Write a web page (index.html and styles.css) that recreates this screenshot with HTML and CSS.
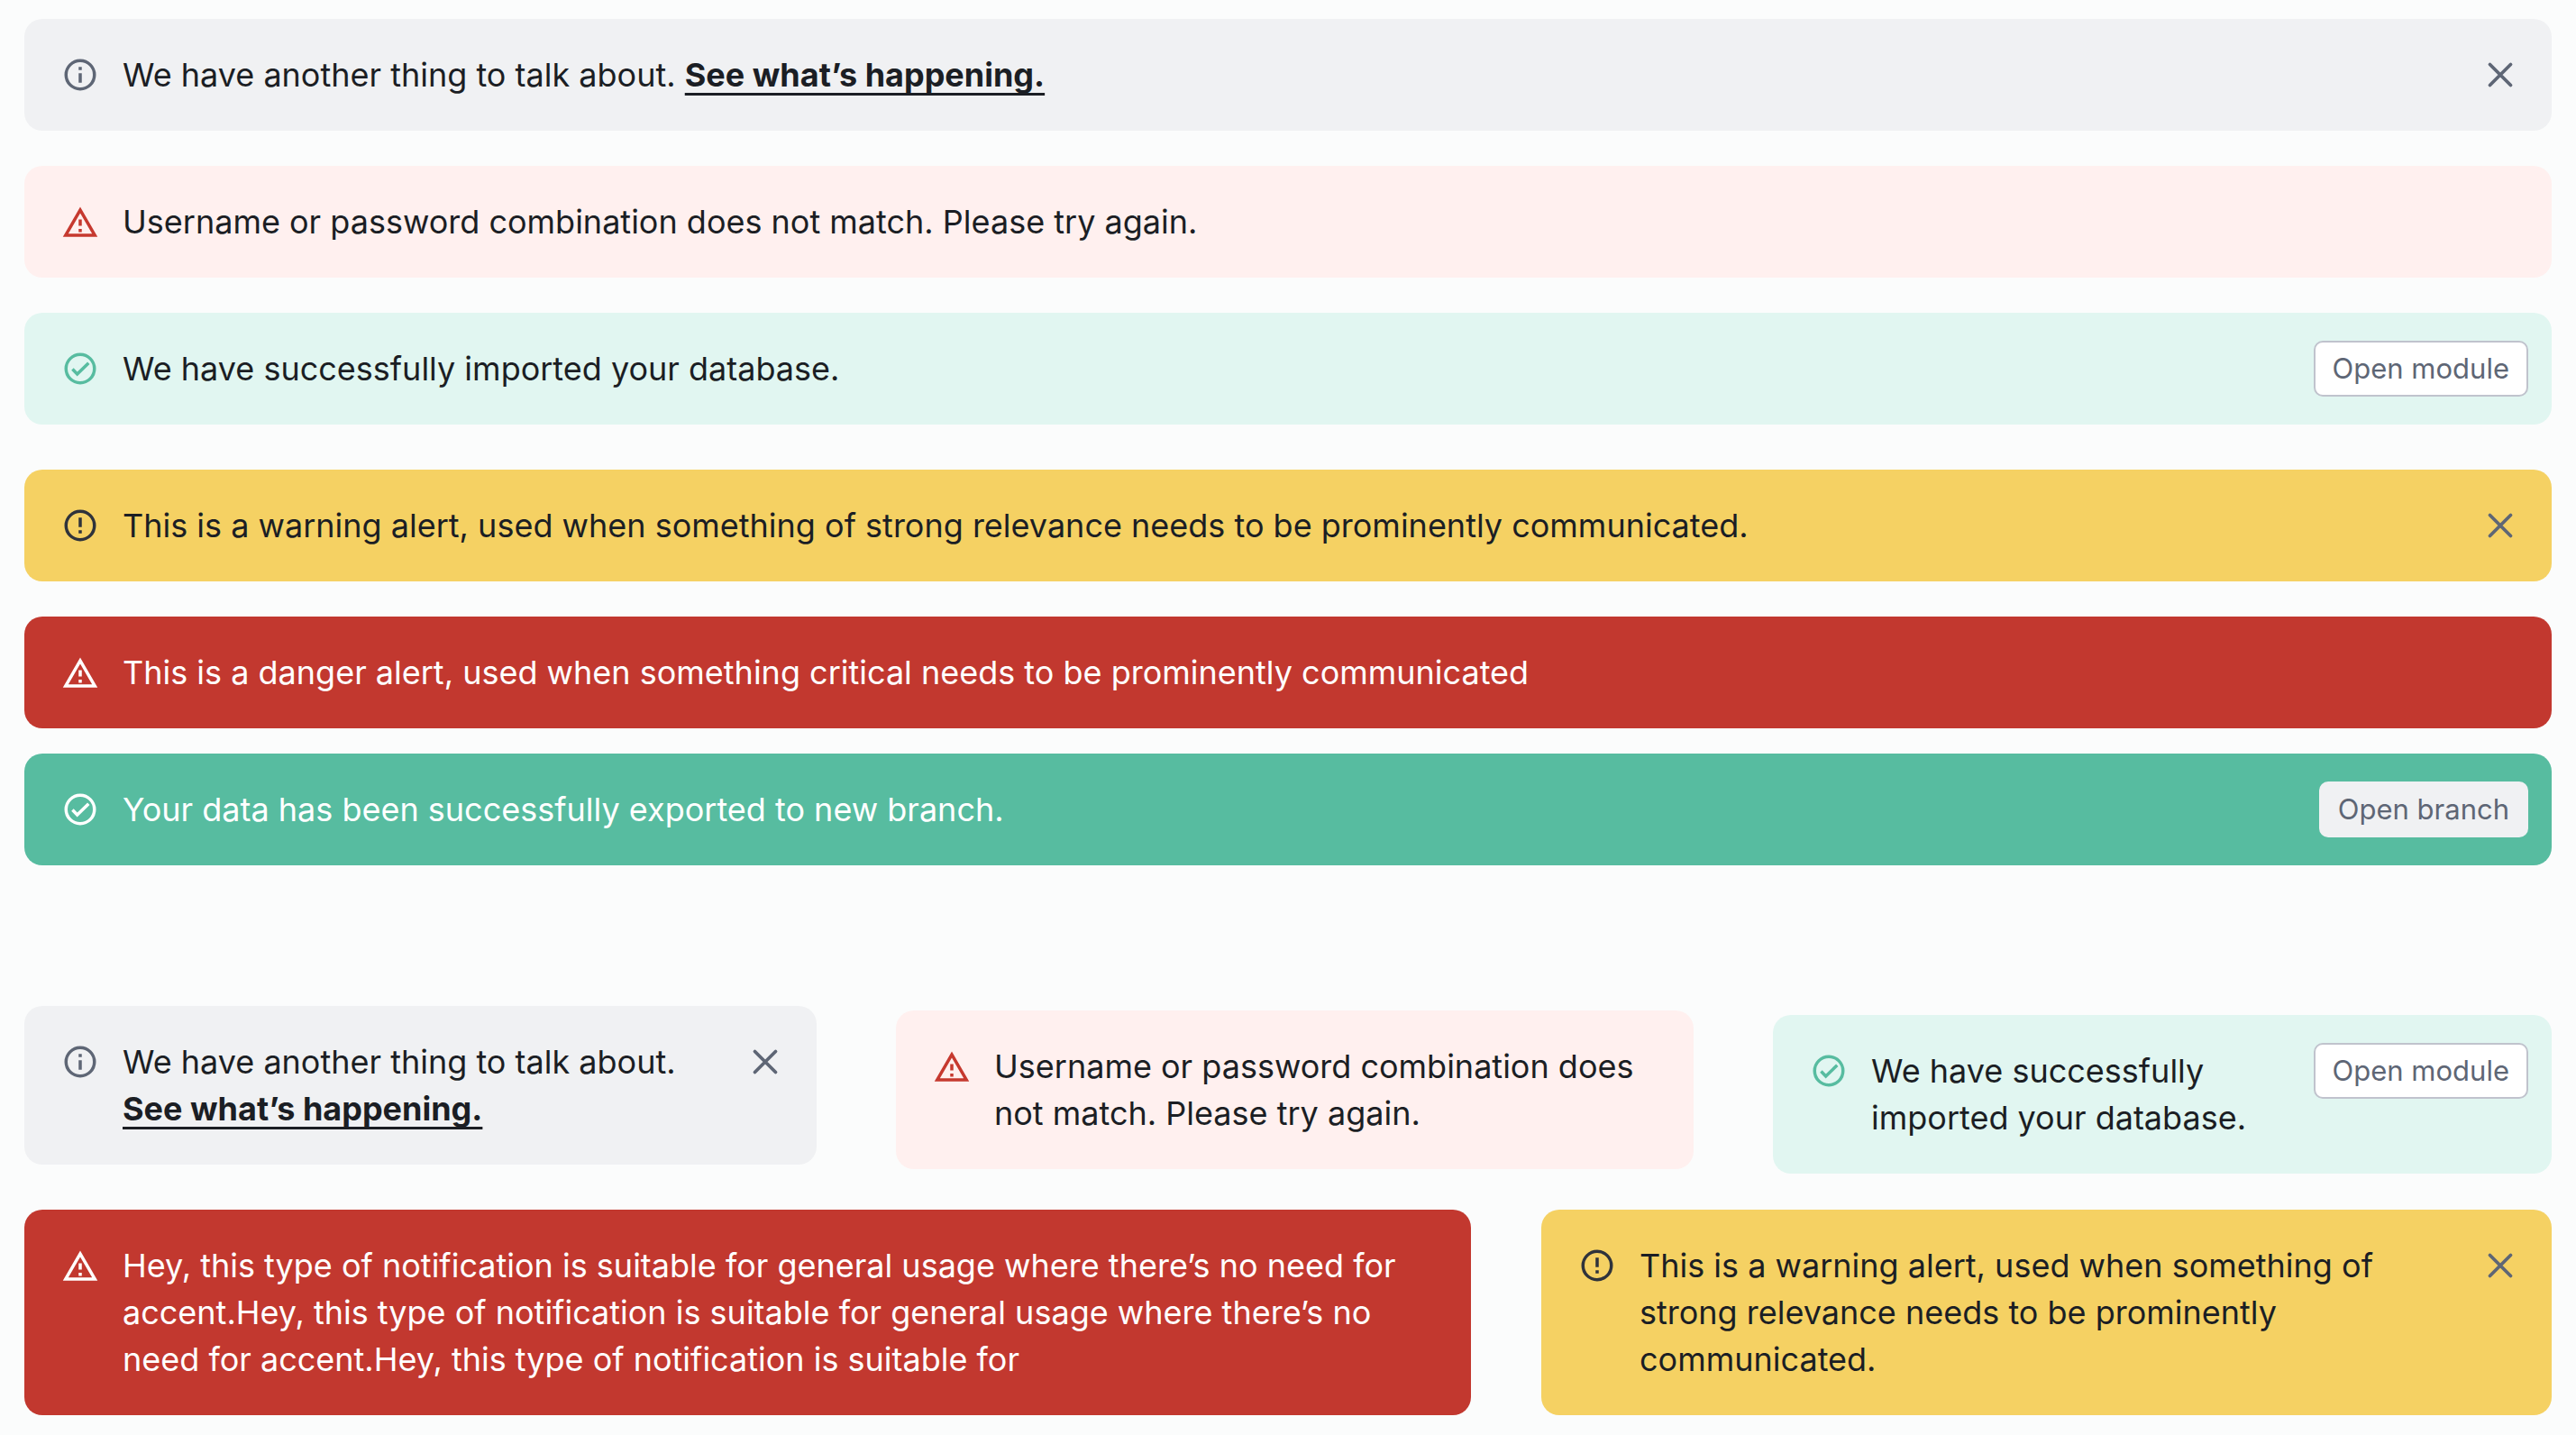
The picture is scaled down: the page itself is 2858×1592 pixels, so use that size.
FILE: index.html
```html
<!DOCTYPE html>
<html lang="en">
<head>
<meta charset="utf-8">
<meta name="viewport" content="width=device-width, initial-scale=1">
<title>Alerts</title>
<link rel="stylesheet" href="styles.css">
</head>
<body>
<svg class="sprite" aria-hidden="true">
  <symbol id="info" viewBox="0 0 24 24"><circle cx="12" cy="12" r="9" fill="none" stroke="currentColor" stroke-width="2"/><path d="M11 7h2v2h-2zM11 11h2v6h-2z"/></symbol>
  <symbol id="error" viewBox="0 0 24 24"><circle cx="12" cy="12" r="9" fill="none" stroke="currentColor" stroke-width="2"/><path d="M11 15h2v2h-2zM11 7h2v6h-2z"/></symbol>
  <symbol id="check" viewBox="0 0 24 24"><circle cx="12" cy="12" r="9" fill="none" stroke="currentColor" stroke-width="2"/><path d="M7.1 12.3 10.1 15.4 17.3 8.4" fill="none" stroke="currentColor" stroke-width="2"/></symbol>
  <symbol id="triangle" viewBox="0 -0.6 24 24"><path d="M12 5.99 19.53 19H4.47L12 5.99M12 2 1 21h22L12 2zm1 14h-2v2h2v-2zm0-6h-2v4h2v-4z"/></symbol>
  <symbol id="close" viewBox="0 0 42 42"><path d="M9.5 9.5 32.5 32.5M32.5 9.5 9.5 32.5" fill="none" stroke="currentColor" stroke-width="3.8" stroke-linecap="round"/></symbol>
</svg>
<main class="page">
  <section class="stack">
    <div class="alert alert-info" role="status">
      <svg class="icon" aria-hidden="true"><use href="#info"/></svg>
      <p class="message">We have another thing to talk about. <a class="link" href="#">See what’s happening.</a></p>
      <button class="close" type="button" aria-label="Dismiss"><svg class="icon-close" aria-hidden="true"><use href="#close"/></svg></button>
    </div>
    <div class="alert alert-error" role="alert">
      <svg class="icon" aria-hidden="true"><use href="#triangle"/></svg>
      <p class="message">Username or password combination does not match. Please try again.</p>
    </div>
    <div class="alert alert-success" role="status">
      <svg class="icon" aria-hidden="true"><use href="#check"/></svg>
      <p class="message">We have successfully imported your database.</p>
      <button class="action action-outline" type="button">Open module</button>
    </div>
  </section>
  <section class="stack">
    <div class="alert alert-warning" role="alert">
      <svg class="icon" aria-hidden="true"><use href="#error"/></svg>
      <p class="message">This is a warning alert, used when something of strong relevance needs to be prominently communicated.</p>
      <button class="close" type="button" aria-label="Dismiss"><svg class="icon-close" aria-hidden="true"><use href="#close"/></svg></button>
    </div>
    <div class="alert alert-danger" role="alert">
      <svg class="icon" aria-hidden="true"><use href="#triangle"/></svg>
      <p class="message">This is a danger alert, used when something critical needs to be prominently communicated</p>
    </div>
  </section>
  <section class="stack exported">
    <div class="alert alert-done" role="status">
      <svg class="icon" aria-hidden="true"><use href="#check"/></svg>
      <p class="message">Your data has been successfully exported to new branch.</p>
      <button class="action" type="button">Open branch</button>
    </div>
  </section>
  <section class="row row-three">
    <div class="alert alert-info" role="status">
      <svg class="icon" aria-hidden="true"><use href="#info"/></svg>
      <p class="message">We have another thing to talk about. <a class="link" href="#">See what’s happening.</a></p>
      <button class="close" type="button" aria-label="Dismiss"><svg class="icon-close" aria-hidden="true"><use href="#close"/></svg></button>
    </div>
    <div class="alert alert-error" role="alert">
      <svg class="icon" aria-hidden="true"><use href="#triangle"/></svg>
      <p class="message">Username or password combination does not match. Please try again.</p>
    </div>
    <div class="alert alert-success" role="status">
      <svg class="icon" aria-hidden="true"><use href="#check"/></svg>
      <p class="message">We have successfully imported your database.</p>
      <button class="action action-outline" type="button">Open module</button>
    </div>
  </section>
  <section class="row row-two">
    <div class="alert alert-danger" role="alert">
      <svg class="icon" aria-hidden="true"><use href="#triangle"/></svg>
      <p class="message">Hey, this type of notification is suitable for general usage where there’s no need for accent.Hey, this type of notification is suitable for general usage where there’s no need for accent.Hey, this type of notification is suitable for</p>
    </div>
    <div class="alert alert-warning" role="alert">
      <svg class="icon" aria-hidden="true"><use href="#error"/></svg>
      <p class="message">This is a warning alert, used when something of strong relevance needs to be prominently communicated.</p>
      <button class="close" type="button" aria-label="Dismiss"><svg class="icon-close" aria-hidden="true"><use href="#close"/></svg></button>
    </div>
  </section>
</main>
</body>
</html>
```
FILE: styles.css
```css
* { box-sizing: border-box; }

body {
  margin: 0;
  background: #fbfcfc;
  color: #1b1e24;
  font-family: Inter, "Liberation Sans", sans-serif;
  font-size: 36px;
  line-height: 52px;
}

.sprite { display: none; }

.page { padding: 21px 27px; }

.stack {
  display: flex;
  flex-direction: column;
  gap: 39px;
  margin-bottom: 50px;
}

.stack.exported {
  margin-top: -22px;
  margin-bottom: 156px;
}

.row { display: grid; }

.row-three {
  grid-template-columns: 879fr 885fr 864fr;
  gap: 88px;
  align-items: start;
  margin-bottom: 40px;
}

.row-three .alert:nth-child(2) { margin-top: 5px; }
.row-three .alert:nth-child(3) { margin-top: 10px; }

.row-two {
  grid-template-columns: 1605fr 1121fr;
  gap: 78px;
}

.alert {
  display: flex;
  align-items: flex-start;
  gap: 26px;
  padding: 31px 26px 31px 41px;
  border-radius: 20px;
}

.alert-info { background: #f0f1f3; }
.alert-error { background: #fff0ef; }
.alert-success { background: #e1f6f1; }
.alert-warning { background: #f5d163; }
.alert-danger { background: #c2382f; color: #fff; }
.alert-done { background: #57bca0; color: #fff; }

.icon {
  flex: none;
  width: 42px;
  height: 42px;
  margin: 10px 0;
  fill: currentColor;
}

.alert-info .icon { color: #5e6675; }
.alert-error .icon { color: #c6392f; }
.alert-success .icon { color: #57bca0; }
.alert-warning .icon { color: #2f333b; }

.message {
  flex: 1;
  margin: 0;
  padding: 5px 0;
}

.link {
  color: inherit;
  font-weight: 700;
  text-decoration: underline;
  text-decoration-thickness: 3px;
  text-decoration-skip-ink: none;
  text-underline-offset: 7px;
}

.close {
  display: flex;
  flex: none;
  align-items: center;
  justify-content: center;
  width: 62px;
  height: 62px;
  padding: 0;
  border: 0;
  background: none;
  color: #5e6675;
}

.icon-close { width: 42px; height: 42px; }

.action {
  flex: none;
  height: 62px;
  padding: 0 21px;
  border: 0;
  border-radius: 10px;
  background: #f0f1f3;
  color: #5e6675;
  font: inherit;
  font-size: 31px;
}

.action-outline {
  padding: 0 19px;
  border: 2px solid #c0c3cd;
  background: #fff;
}
```
